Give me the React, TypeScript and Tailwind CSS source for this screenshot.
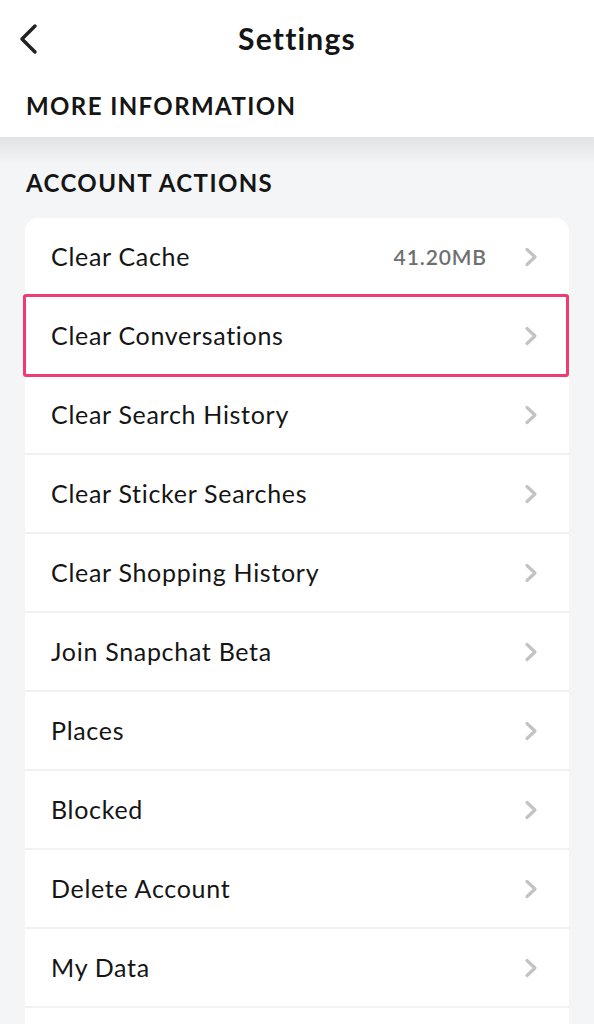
const rows = [
  { label: "Clear Cache", value: "41.20MB" },
  { label: "Clear Conversations", highlight: true },
  { label: "Clear Search History" },
  { label: "Clear Sticker Searches" },
  { label: "Clear Shopping History" },
  { label: "Join Snapchat Beta" },
  { label: "Places" },
  { label: "Blocked" },
  { label: "Delete Account" },
  { label: "My Data" },
  { label: "" },
]

function Chevron() {
  return (
    <svg width="16" height="20" viewBox="0 0 16 20" fill="none">
      <path d="M4 2.5l8 7.5-8 7.5" stroke="#c2c3c5" strokeWidth="3.2" strokeLinecap="round" strokeLinejoin="round" />
    </svg>
  )
}

export default function App() {
  return (
    <div className="w-[594px] h-[1024px] overflow-hidden bg-[#f4f5f6] text-[#151515]" style={{ fontFamily: "Lato, 'Open Sans', sans-serif" }}>
      <div className="bg-white">
        <div className="relative flex h-[76px] items-center justify-center">
          <svg className="absolute left-[16px] top-[23px]" width="24" height="32" viewBox="0 0 24 32" fill="none">
            <path d="M19 3L6 16l13 13" stroke="#222" strokeWidth="3.5" strokeLinecap="round" strokeLinejoin="round" />
          </svg>
          <span className="text-[30px] font-bold tracking-[1.2px]">Settings</span>
        </div>
        <div className="h-[61px] px-[26px] pt-[12px] text-[24px] font-bold tracking-[1.4px]">MORE INFORMATION</div>
      </div>
      <div className="h-[28px] bg-gradient-to-b from-[#e2e3e4] to-[#f4f5f6]" />
      <div className="h-[53px] px-[26px] text-[24px] font-bold tracking-[1.4px]">ACCOUNT ACTIONS</div>
      <div className="mx-[25px] rounded-t-[14px] bg-white">
        {rows.map((row, i) => (
          <div key={i} className="relative flex h-[79px] items-center border-b-2 border-[#f0f1f2] pl-[26px] pr-[30px]">
            <span className="flex-1 text-[25px] tracking-[0.7px]">{row.label}</span>
            {row.value && <span className="mr-[36px] text-[21px] font-semibold text-[#6e6f71] tracking-[0.9px]">{row.value}</span>}
            {row.label && <Chevron />}
            {row.highlight && (
              <div className="absolute -left-[2px] right-0 -top-[3px] -bottom-[3px] rounded-[3px] border-[3px] border-[#f03a70]" />
            )}
          </div>
        ))}
      </div>
    </div>
  )
}
